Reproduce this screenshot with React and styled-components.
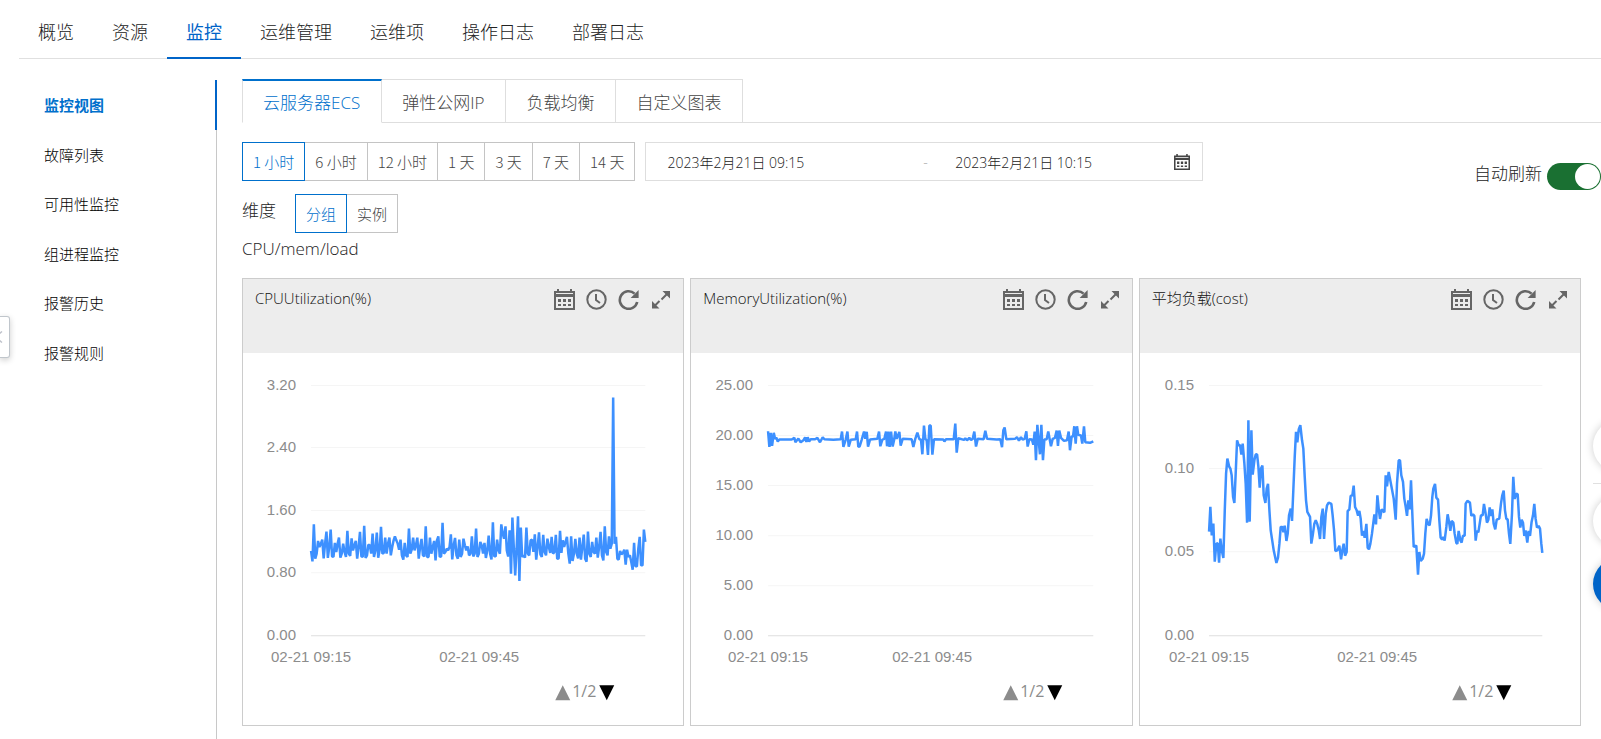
import React, { useState } from 'react';
import styled, { createGlobalStyle } from 'styled-components';

const NAV = ['概览', '资源', '监控', '运维管理', '运维项', '操作日志', '部署日志'];
const SIDE = ['监控视图', '故障列表', '可用性监控', '组进程监控', '报警历史', '报警规则'];
const TABS = ['云服务器ECS', '弹性公网IP', '负载均衡', '自定义图表'];
const RANGES = ['1 小时', '6 小时', '12 小时', '1 天', '3 天', '7 天', '14 天'];
const DIMENSIONS = ['分组', '实例'];

// every level is counted in 1/750 of the axis height
const CPU_LEVELS = [
  254, 223, 334, 231, 246, 284, 266, 276, 288, 232, 276, 312, 233, 266, 318, 238, 236, 278, 251, 276,
  294, 234, 246, 276, 251, 236, 314, 246, 239, 292, 256, 271, 284, 231, 266, 311, 238, 236, 329, 233,
  241, 273, 271, 246, 306, 236, 256, 309, 234, 256, 326, 246, 248, 294, 246, 276, 294, 241, 266, 286,
  298, 286, 276, 258, 288, 241, 228, 278, 241, 236, 321, 246, 258, 294, 256, 271, 294, 231, 266, 290,
  241, 238, 328, 236, 236, 294, 246, 266, 284, 226, 286, 298, 236, 238, 338, 246, 251, 261, 256, 266,
  304, 229, 271, 293, 241, 231, 288, 236, 246, 291, 271, 256, 268, 241, 246, 298, 238, 246, 321, 236,
  246, 281, 271, 246, 278, 233, 256, 300, 246, 229, 340, 238, 238, 288, 256, 246, 334, 306, 291, 328,
  256, 238, 316, 186, 354, 266, 181, 260, 358, 164, 324, 236, 241, 234, 324, 246, 241, 286, 288, 251,
  304, 228, 266, 310, 244, 236, 302, 251, 241, 291, 266, 248, 296, 246, 251, 302, 230, 232, 314, 248,
  286, 266, 281, 296, 246, 216, 298, 224, 246, 290, 246, 232, 294, 228, 266, 303, 231, 222, 312, 246,
  236, 281, 251, 246, 294, 234, 266, 311, 241, 226, 328, 251, 241, 298, 261, 276, 714, 276, 296, 231,
  228, 254, 244, 248, 258, 213, 258, 236, 241, 221, 198, 278, 208, 208, 260, 296, 211, 211, 318, 281,
];

const MEMORY_POINTS = [
  [0, 613], [4, 566], [8, 608], [12, 569], [17, 608], [21, 590], [25, 594], [29, 582], [34, 588], [71, 588],
  [79, 593], [82, 580], [91, 591], [98, 580], [106, 586], [111, 595], [115, 581], [119, 595], [123, 582],
  [128, 589], [141, 589], [148, 593], [156, 580], [164, 595], [169, 589], [196, 587], [218, 589], [222, 612],
  [226, 566], [233, 588], [238, 612], [242, 567], [248, 587], [263, 589], [267, 612], [271, 566], [275, 568],
  [281, 588], [288, 612], [292, 590], [296, 611], [300, 567], [306, 588], [328, 590], [333, 612], [337, 568],
  [343, 588], [349, 590], [354, 612], [357, 568], [361, 612], [365, 566], [369, 612], [374, 567], [378, 586],
  [382, 612], [386, 590], [394, 611], [398, 570], [404, 590], [431, 589], [436, 566], [442, 591], [448, 609],
  [454, 589], [459, 588], [463, 544], [468, 630], [472, 590], [476, 586], [480, 542], [484, 630], [488, 630],
  [493, 543], [498, 589], [526, 588], [529, 582], [534, 589], [557, 589], [562, 636], [566, 549], [571, 592],
  [588, 587], [592, 592], [597, 586], [604, 593], [609, 587], [614, 590], [619, 612], [624, 567], [629, 590],
  [647, 589], [652, 614], [657, 590], [686, 588], [697, 589], [702, 565], [706, 616], [710, 624], [715, 589],
  [741, 590], [747, 595], [753, 585], [759, 595], [764, 588], [770, 590], [775, 613], [779, 567], [784, 589],
  [792, 588], [796, 573], [800, 612], [804, 526], [808, 632], [812, 586], [816, 544], [820, 632], [825, 526],
  [829, 588], [836, 589], [841, 612], [849, 568], [854, 590], [861, 593], [866, 615], [870, 569], [874, 615],
  [879, 593], [888, 584], [897, 586], [902, 612], [906, 556], [911, 598], [915, 596], [919, 628], [923, 576],
  [927, 628], [931, 602], [939, 600], [943, 576], [948, 628], [952, 580], [966, 578], [976, 583],
];

const LOAD_POINTS = [
  [0, 312], [4, 386], [8, 301], [13, 336], [17, 222], [22, 276], [26, 277], [30, 219], [34, 291], [38, 256],
  [43, 233], [47, 376], [51, 486], [55, 531], [60, 508], [64, 501], [68, 481], [72, 416], [76, 398], [80, 486],
  [84, 586], [89, 571], [93, 571], [97, 543], [101, 576], [106, 516], [110, 456], [114, 339], [118, 646],
  [122, 342], [127, 616], [131, 483], [136, 526], [140, 543], [144, 544], [148, 506], [152, 444], [156, 501],
  [160, 510], [164, 421], [169, 398], [173, 441], [177, 455], [181, 376], [185, 316], [194, 256], [202, 218],
  [207, 234], [211, 276], [215, 326], [220, 326], [223, 310], [227, 330], [232, 284], [236, 306], [240, 361],
  [245, 381], [249, 344], [253, 436], [257, 536], [261, 611], [265, 580], [269, 618], [274, 631], [279, 586],
  [283, 561], [287, 476], [291, 406], [295, 371], [303, 356], [307, 276], [311, 301], [316, 336], [320, 346],
  [325, 334], [329, 316], [333, 290], [337, 356], [341, 381], [345, 290], [350, 366], [354, 391], [359, 399],
  [367, 395], [371, 361], [375, 316], [379, 254], [385, 256], [391, 270], [396, 229], [400, 256], [404, 276],
  [408, 240], [413, 251], [416, 374], [421, 378], [425, 419], [430, 421], [434, 450], [438, 386], [443, 376],
  [447, 360], [451, 374], [455, 351], [459, 300], [463, 314], [467, 294], [472, 335], [476, 264], [480, 259],
  [484, 276], [489, 306], [496, 364], [501, 334], [505, 421], [509, 381], [513, 350], [518, 379], [526, 370],
  [530, 481], [534, 448], [539, 491], [547, 448], [554, 411], [560, 348], [564, 456], [569, 526], [573, 526],
  [577, 481], [582, 461], [586, 411], [590, 386], [594, 359], [598, 406], [602, 379], [606, 466], [610, 366],
  [614, 266], [622, 270], [627, 183], [631, 251], [635, 224], [641, 231], [645, 246], [649, 306], [653, 350],
  [658, 334], [662, 331], [666, 361], [670, 416], [673, 441], [678, 455], [682, 414], [687, 408], [691, 346],
  [695, 294], [699, 288], [703, 296], [707, 285], [712, 326], [716, 364], [720, 341], [724, 314], [728, 344],
  [733, 339], [737, 306], [742, 278], [745, 275], [749, 314], [754, 286], [758, 279], [762, 300], [767, 300],
  [770, 396], [775, 404], [783, 399], [787, 359], [792, 364], [796, 359], [800, 285], [804, 314], [808, 310],
  [816, 361], [821, 361], [825, 395], [829, 371], [834, 339], [838, 348], [842, 385], [846, 359], [850, 379],
  [854, 336], [859, 319], [863, 348], [871, 351], [876, 396], [880, 421], [884, 435], [888, 376], [892, 351],
  [896, 348], [900, 306], [904, 275], [909, 366], [913, 476], [917, 410], [922, 426], [926, 424], [930, 356],
  [934, 324], [938, 348], [942, 339], [946, 299], [950, 316], [955, 279], [959, 314], [963, 299], [968, 341],
  [972, 361], [976, 395], [980, 351], [984, 324], [989, 329], [993, 321], [997, 276], [1000, 248],
];

const CHARTS = [
  {
    title: 'CPUUtilization(%)',
    ticks: ['3.20', '2.40', '1.60', '0.80', '0.00'],
    left: 68,
    right: 402,
    points: CPU_LEVELS.map((level, i) => [i, level]),
  },
  {
    title: 'MemoryUtilization(%)',
    ticks: ['25.00', '20.00', '15.00', '10.00', '5.00', '0.00'],
    left: 77,
    right: 402,
    points: MEMORY_POINTS,
  },
  {
    title: '平均负载(cost)',
    ticks: ['0.15', '0.10', '0.05', '0.00'],
    left: 69,
    right: 402,
    points: LOAD_POINTS,
  },
];

const PLOT_TOP = 32;
const PLOT_HEIGHT = 250;

const CalendarIcon = ({ size }) => (
  <svg width={size} height={size} viewBox="0 0 21 21" fill="currentColor" aria-hidden="true">
    <path fillRule="evenodd" d="M0 2h3V0h2v2h11V0h2v2h3v19H0zM2 4v1h17V4zM2 8v11h17V8z" />
    <path d="M4 10h3v3H4zM9 10h3v3H9zM14 10h3v3h-3zM4 15h3v2H4zM9 15h3v2H9zM14 15h3v2h-3z" />
  </svg>
);

const ClockIcon = () => (
  <svg width="21" height="21" viewBox="0 0 21 21" fill="none" stroke="currentColor" strokeWidth="2" aria-hidden="true">
    <circle cx="10.5" cy="10.5" r="9.2" />
    <path d="M10 5v6l4 3" />
  </svg>
);

const RefreshIcon = () => (
  <svg width="21" height="21" viewBox="0 0 21 21" aria-hidden="true">
    <path d="M16.6 4.6A8.8 8.8 0 1 0 19.2 13" fill="none" stroke="currentColor" strokeWidth="2.6" />
    <path d="M20.6 1v8h-8z" fill="currentColor" />
  </svg>
);

const ExpandIcon = () => (
  <svg width="21" height="21" viewBox="0 0 21 21" aria-hidden="true">
    <path d="M12.500 2H20v7.500zM2 12v7.500h7.500z" fill="currentColor" />
    <path d="M17 5l-5.500 5.500M5 16.500l4.500-4.500" fill="none" stroke="currentColor" strokeWidth="2" />
  </svg>
);

const Chart = ({ ticks, left, right, points }) => {
  const width = right - left;
  const lastX = points[points.length - 1][0];
  const step = PLOT_HEIGHT / (ticks.length - 1);
  const bottom = PLOT_TOP + PLOT_HEIGHT;
  const line = points
    .map(([x, level]) => `${(left + (x / lastX) * width).toFixed(1)},${(bottom + 0.5 - level / 3).toFixed(1)}`)
    .join(' ');

  return (
    <ChartSvg viewBox="0 0 440 372" role="img">
      {ticks.map((tick, i) => {
        const y = Math.floor(PLOT_TOP + i * step) + 0.5;
        return (
          <g key={tick}>
            <line x1={left} x2={right} y1={y} y2={y} stroke={i === ticks.length - 1 ? '#dedede' : '#f5f5f5'} />
            <text x={left - 15} y={y + 4} textAnchor="end">{tick}</text>
          </g>
        );
      })}
      <text x={left} y="309" textAnchor="middle">02-21 09:15</text>
      <text x={left + Math.round(width * 0.504)} y="309" textAnchor="middle">02-21 09:45</text>
      <polyline points={line} fill="none" stroke="#3d90ff" strokeWidth="2.500" strokeLinejoin="bevel" />
      <path d="M312 347l7.500-15 7.500 15z" fill="#8c8c8c" />
      <PageText x="341" y="344" textAnchor="middle">1/2</PageText>
      <path d="M356 332h15l-7.500 15z" fill="#000" />
    </ChartSvg>
  );
};

const App = () => {
  const [nav, setNav] = useState(2);
  const [side, setSide] = useState(0);
  const [tab, setTab] = useState(0);
  const [range, setRange] = useState(0);
  const [dimension, setDimension] = useState(0);
  const [auto, setAuto] = useState(true);

  return (
    <Page>
      <GlobalStyle />
      <TopNav>
        {NAV.map((name, i) => (
          <NavLink key={name} href="#" $active={i === nav} onClick={() => setNav(i)}>{name}</NavLink>
        ))}
      </TopNav>
      <Body>
        <Sidebar>
          <SideList>
            {SIDE.map((name, i) => (
              <SideLink key={name} href="#" $active={i === side} onClick={() => setSide(i)}>{name}</SideLink>
            ))}
          </SideList>
        </Sidebar>
        <Content>
          <Tabs role="tablist">
            {TABS.map((name, i) => (
              <Tab key={name} role="tab" aria-selected={i === tab} $active={i === tab} onClick={() => setTab(i)}>
                {name}
              </Tab>
            ))}
          </Tabs>
          <Filters>
            <FilterRows>
              <Row $gap="10px">
                <ButtonGroup>
                  {RANGES.map((name, i) => (
                    <GroupButton key={name} $active={i === range} onClick={() => setRange(i)}>{name}</GroupButton>
                  ))}
                </ButtonGroup>
                <DateRange>
                  <DateInput $grow={7} aria-label="开始时间" defaultValue="2023年2月21日 09:15" />
                  <Dash>-</Dash>
                  <DateInput $grow={6} aria-label="结束时间" defaultValue="2023年2月21日 10:15" />
                  <CalendarIcon size={16} />
                </DateRange>
              </Row>
              <Row $gap="19px">
                <Label>维度</Label>
                <ButtonGroup>
                  {DIMENSIONS.map((name, i) => (
                    <GroupButton key={name} $active={i === dimension} onClick={() => setDimension(i)}>{name}</GroupButton>
                  ))}
                </ButtonGroup>
              </Row>
            </FilterRows>
            <AutoRefresh>
              自动刷新
              <Switch type="checkbox" role="switch" checked={auto} onChange={() => setAuto(!auto)} />
            </AutoRefresh>
          </Filters>
          <GroupTitle>CPU/mem/load</GroupTitle>
          <Cards>
            {CHARTS.map((chart) => (
              <Card key={chart.title}>
                <CardHeader>
                  <CardTitle>{chart.title}</CardTitle>
                  <Tools>
                    <ToolButton aria-label="选择日期"><CalendarIcon size={21} /></ToolButton>
                    <ToolButton aria-label="选择时间"><ClockIcon /></ToolButton>
                    <ToolButton aria-label="刷新"><RefreshIcon /></ToolButton>
                    <ToolButton aria-label="放大"><ExpandIcon /></ToolButton>
                  </Tools>
                </CardHeader>
                <Chart {...chart} />
              </Card>
            ))}
          </Cards>
        </Content>
      </Body>
      <Collapse aria-label="收起">
        <svg width="10" height="12" viewBox="0 0 10 12" fill="none" stroke="#c0c4cc" strokeWidth="1.500" aria-hidden="true">
          <path d="M6 0.500L-0.500 6L6 11.500" />
        </svg>
      </Collapse>
      <Dock>
        <DockButton aria-label="帮助" />
        <DockLine />
        <DockButton aria-label="反馈" />
        <DockButton aria-label="客服" $primary />
      </Dock>
    </Page>
  );
};
export default App;

const GlobalStyle = createGlobalStyle`
  body {
    margin: 0;
    overflow: hidden;
    background: #fff;
    color: #222;
    font-family: 'Open Sans', 'Noto Sans CJK SC', sans-serif;
    font-size: 15px;
    font-weight: 300;
  }

  * {
    box-sizing: border-box;
  }

  button,
  input {
    font: inherit;
    color: inherit;
  }

  a {
    color: inherit;
    text-decoration: none;
  }
`;

const Page = styled.div`
  display: flex;
  flex-direction: column;
  height: 100vh;
`;

const TopNav = styled.nav`
  display: flex;
  margin-left: 19px;
  padding-top: 6px;
  border-bottom: 1px solid #e0e0e0;
`;

const NavLink = styled.a`
  height: 53px;
  margin-bottom: -1px;
  padding: 0 19px;
  border-bottom: 2px solid ${(props) => (props.$active ? '#0064c8' : 'transparent')};
  color: ${(props) => (props.$active ? '#0064c8' : '#222')};
  font-size: 18px;
  font-weight: ${(props) => (props.$active ? 400 : 300)};
  line-height: 52px;
`;

const Body = styled.div`
  display: flex;
  flex: 1;
  min-height: 0;
  padding-top: 20px;
`;

const Sidebar = styled.nav`
  flex: 0 0 217px;
  margin-top: 1px;
  border-right: 1px solid #c8c8c8;
`;

const SideList = styled.div`
  display: grid;
  grid-auto-rows: 1fr;
  height: 297px;
  margin-right: -1px;
`;

const SideLink = styled.a`
  display: flex;
  align-items: center;
  padding-left: 44px;
  border-right: ${(props) => (props.$active ? '2px solid #0064c8' : '0')};
  color: ${(props) => (props.$active ? '#0070cc' : '#000')};
  font-weight: ${(props) => (props.$active ? 700 : 300)};
`;

const Content = styled.main`
  flex: 1;
  min-width: 0;
  padding-left: 25px;
`;

const Tabs = styled.div`
  display: flex;
  height: 44px;
  border-bottom: 1px solid #dedede;
`;

const Tab = styled.button`
  height: 44px;
  padding: 0 21px 0 20px;
  border: 1px solid #dedede;
  border-left-width: ${(props) => (props.$active ? '1px' : '0')};
  border-top: ${(props) => (props.$active ? '2px solid #0070cc' : '1px solid #dedede')};
  border-bottom-color: ${(props) => (props.$active ? '#fff' : '#dedede')};
  background: #fff;
  color: ${(props) => (props.$active ? '#0070cc' : '#444')};
  font-size: 17px;
`;

const Filters = styled.div`
  display: flex;
  justify-content: space-between;
  margin-top: 19px;
`;

const FilterRows = styled.div`
  display: flex;
  flex-direction: column;
  gap: 13px;
`;

const Row = styled.div`
  display: flex;
  gap: ${(props) => props.$gap};
`;

const ButtonGroup = styled.div`
  display: flex;
  font-family: 'Noto Sans CJK SC', sans-serif;
`;

const GroupButton = styled.button`
  position: relative;
  z-index: ${(props) => (props.$active ? 1 : 0)};
  height: 39px;
  padding: 0 10px;
  border: 1px solid ${(props) => (props.$active ? '#0070cc' : '#c4c4c4')};
  background: #fff;
  color: ${(props) => (props.$active ? '#0070cc' : '#444')};

  & + & {
    margin-left: -1px;
  }
`;

const DateRange = styled.div`
  display: flex;
  align-items: center;
  width: 558px;
  height: 39px;
  padding: 0 12px 0 21px;
  border: 1px solid #dedede;
  color: #444;
  font-size: 14px;
`;

const DateInput = styled.input`
  flex: ${(props) => props.$grow} 1 0;
  min-width: 0;
  padding: 0;
  border: 0;
  outline: 0;
  background: none;
  color: #222;
`;

const Dash = styled.span`
  width: 32px;
  color: #aaa;
`;

const Label = styled.span`
  font-size: 17px;
  line-height: 34px;
`;

const AutoRefresh = styled.label`
  display: flex;
  gap: 5px;
  height: 27px;
  margin-top: 21px;
  font-size: 17px;
  line-height: 22px;
`;

const Switch = styled.input`
  appearance: none;
  display: flex;
  justify-content: ${(props) => (props.checked ? 'flex-end' : 'flex-start')};
  width: 54px;
  height: 27px;
  margin: 0;
  padding: 1px;
  border-radius: 14px;
  background: ${(props) => (props.checked ? '#1a7032' : '#ccc')};

  &::before {
    content: '';
    width: 25px;
    height: 25px;
    border-radius: 50%;
    background: #fff;
  }
`;

const GroupTitle = styled.h2`
  margin: 0;
  font-size: 17px;
  font-weight: 300;
  line-height: 32px;
`;

const Cards = styled.div`
  display: grid;
  grid-template-columns: repeat(3, 1fr);
  gap: 6px;
  margin-top: 13px;
  padding-right: 20px;
`;

const Card = styled.section`
  border: 1px solid #ccc;
`;

const CardHeader = styled.header`
  display: flex;
  justify-content: space-between;
  align-items: flex-start;
  height: 74px;
  padding: 10px 12px 0 12px;
  background: #ededed;
`;

const CardTitle = styled.h3`
  margin: 0;
  color: #111;
  font-size: 15px;
  font-weight: 300;
  line-height: 18px;
`;

const Tools = styled.div`
  display: flex;
  gap: 11px;
  color: #666;
`;

const ToolButton = styled.button`
  display: flex;
  padding: 0;
  border: 0;
  background: none;
`;

const ChartSvg = styled.svg`
  display: block;
  width: 100%;
  fill: #8c8c8c;
  font-family: 'Liberation Sans', Arial, sans-serif;
  font-size: 15px;
  font-weight: 400;
`;

const PageText = styled.text`
  font-family: 'Open Sans', sans-serif;
  font-size: 16px;
`;

const Collapse = styled.button`
  position: fixed;
  top: 316px;
  left: 0;
  display: flex;
  align-items: center;
  width: 10px;
  height: 42px;
  padding: 0;
  border: 1px solid #c0c6cc;
  border-left: 0;
  border-radius: 0 3px 3px 0;
  background: #fff;
  box-shadow: 0 2px 6px rgba(0, 0, 0, 0.2);

  svg {
    flex: none;
    margin-left: -4px;
  }
`;

const Dock = styled.aside`
  position: fixed;
  top: 420px;
  right: -44px;
  display: flex;
  flex-direction: column;
  gap: 11px;
  width: 52px;
`;

const DockButton = styled.button`
  height: 52px;
  padding: 0;
  border: 0;
  border-radius: 50%;
  background: ${(props) => (props.$primary ? '#0064c8' : '#fff')};
  box-shadow: 0 0 8px rgba(0, 0, 0, 0.2);
`;

const DockLine = styled.div`
  height: 1px;
  background: #e0e0e0;
`;
